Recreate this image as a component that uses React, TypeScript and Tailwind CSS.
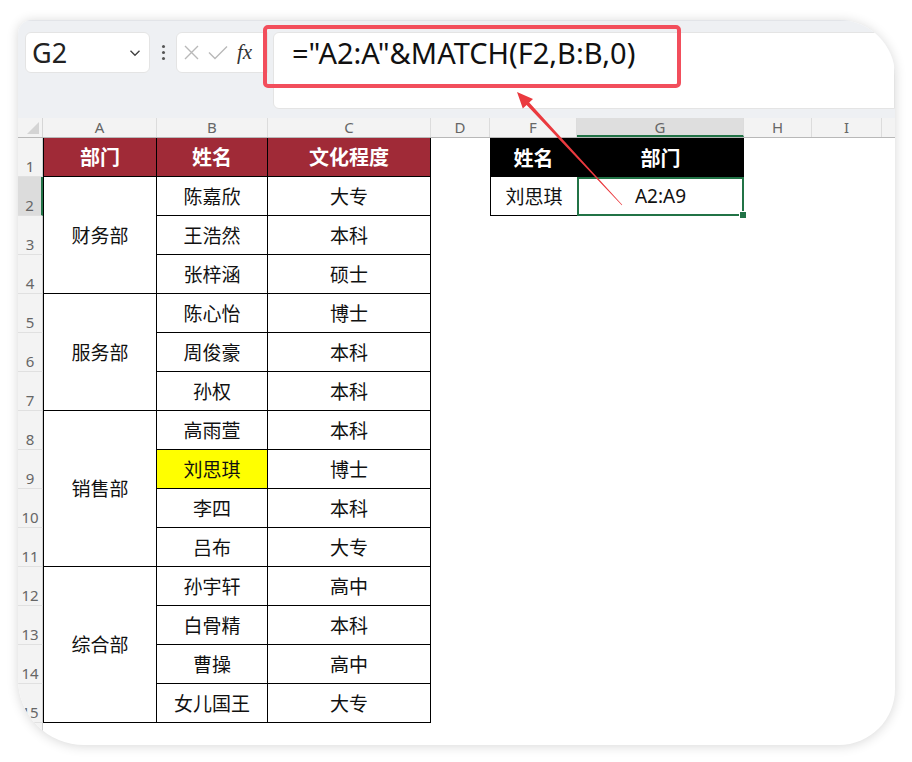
import React from 'react';

const CJK = "font-['Noto_Sans_CJK_SC','Noto_Sans',sans-serif]";
const LATIN = "font-['Noto_Sans','Liberation_Sans',sans-serif]";

const PEOPLE = [
    ['陈嘉欣', '大专'],
    ['王浩然', '本科'],
    ['张梓涵', '硕士'],
    ['陈心怡', '博士'],
    ['周俊豪', '本科'],
    ['孙权', '本科'],
    ['高雨萱', '本科'],
    ['刘思琪', '博士'],
    ['李四', '本科'],
    ['吕布', '大专'],
    ['孙宇轩', '高中'],
    ['白骨精', '本科'],
    ['曹操', '高中'],
    ['女儿国王', '大专'],
];

const DEPTS = [
    { name: '财务部', h: 'h-[117px]' },
    { name: '服务部', h: 'h-[117px]' },
    { name: '销售部', h: 'h-[156px]' },
    { name: '综合部', h: 'h-[156px]' },
];

const COLS = [
    { label: 'A', w: 'w-[114px]' },
    { label: 'B', w: 'w-[111px]' },
    { label: 'C', w: 'w-[163px]' },
    { label: 'D', w: 'w-[59px]' },
    { label: 'F', w: 'w-[87px]' },
    { label: 'G', w: 'w-[167px]' },
    { label: 'H', w: 'w-[68px]' },
    { label: 'I', w: 'w-[70px]' },
];

function Toolbar() {
    return (
        <div className="h-[98px] bg-[#eef0f3] flex items-start pt-[11px] border-t border-[#e2e4e8]">
            <div className="ml-[7px] w-[125px] h-[41px] bg-white rounded-[6px] border border-[#e4e4e4] flex items-center justify-between pl-[6px] pr-[8px]">
                <span className={`${LATIN} text-[27px] leading-none text-[#222]`}>G2</span>
                <svg width="12" height="8" viewBox="0 0 12 8">
                    <path d="M1.5 1.8 L6 6.2 L10.5 1.8" fill="none" stroke="#444" strokeWidth="1.4" />
                </svg>
            </div>
            <div className="w-[26px] h-[41px] flex flex-col items-center justify-center gap-[3px]">
                <span className="w-[3px] h-[3px] bg-[#555] rounded-full" />
                <span className="w-[3px] h-[3px] bg-[#555] rounded-full" />
                <span className="w-[3px] h-[3px] bg-[#555] rounded-full" />
            </div>
            <div className="w-[92px] h-[41px] bg-white rounded-l-[6px] border border-[#e4e4e4] flex items-center pl-[7px] gap-[9px]">
                <svg width="15" height="15" viewBox="0 0 15 15">
                    <path d="M1 1 L14 14 M14 1 L1 14" stroke="#b9b9b9" strokeWidth="1.4" />
                </svg>
                <svg width="20" height="15" viewBox="0 0 20 15">
                    <path d="M1 7.5 L7 13.5 L19 1.5" fill="none" stroke="#b9b9b9" strokeWidth="1.4" />
                </svg>
                <span className="font-['Liberation_Serif',serif] italic text-[21px] leading-none text-[#333]">fx</span>
            </div>
            <div className="ml-[5px] flex-1 h-[77px] bg-white rounded-l-[6px] border border-[#e4e4e4] pl-[18px]">
                <div className={`${LATIN} text-[29px] leading-[40px] text-[#111]`}>="A2:A"&amp;MATCH(F2,B:B,0)</div>
            </div>
        </div>
    );
}

function ColumnHeaders() {
    return (
        <div className={`h-[20px] flex bg-[#f3f3f3] border-b border-[#b8b8b8] ${LATIN} text-[15px] text-[#666] leading-[19px]`}>
            <div className="w-[25px] border-r border-[#d6d6d6] relative">
                <span className="absolute right-[3px] bottom-[3px] w-0 h-0 border-l-[12px] border-l-transparent border-b-[12px] border-b-[#d4d4d4]" />
            </div>
            {COLS.map((c) => (
                <div
                    key={c.label}
                    className={`${c.w} text-center border-r border-[#dcdcdc] ${c.label === 'G' ? 'bg-[#dedede] border-b-2 border-b-[#217346]' : ''}`}
                >
                    {c.label}
                </div>
            ))}
            <div className="flex-1" />
        </div>
    );
}

function RowHeaders() {
    const rows = Array.from({ length: 16 }, (_, i) => i + 1);
    return (
        <div className={`w-[25px] flex flex-col ${LATIN} text-[15px] text-[#666] leading-none`}>
            {rows.map((n) => (
                <div
                    key={n}
                    className={`h-[39px] shrink-0 flex items-end justify-center pb-[2px] border-b border-[#e0e0e0] ${
                        n === 2 ? 'bg-[#dcdcdc] border-r-2 border-r-[#217346]' : 'bg-[#f3f3f3] border-r border-r-[#cfcfcf]'
                    }`}
                >
                    {n < 16 ? n : ''}
                </div>
            ))}
        </div>
    );
}

function HeadCell({ children, bg }: { children: React.ReactNode; bg: string }) {
    return (
        <div className={`h-[39px] shrink-0 flex items-center justify-center text-white font-bold text-[20px] ${bg}`}>
            {children}
        </div>
    );
}

export default function App() {
    return (
        <div className="w-[912px] h-[762px] bg-white overflow-hidden pt-[20px] pl-[18px]">
            <div className="relative w-[877px] h-[725px] overflow-hidden bg-white rounded-tl-[14px] rounded-tr-[56px] rounded-br-[56px] rounded-bl-[66px] shadow-[0_1px_12px_rgba(0,0,0,0.16)]">
                <Toolbar />
                <ColumnHeaders />
                <div className={`flex ${CJK} text-[19px] text-[#111]`}>
                    <RowHeaders />
                    {/* A: departments, merged */}
                    <div className="w-[114px] flex flex-col">
                        <HeadCell bg="bg-[#a02a37] border-l border-r border-b border-black">部门</HeadCell>
                        {DEPTS.map((d) => (
                            <div key={d.name} className={`${d.h} shrink-0 flex items-center justify-center border-l border-r border-b border-black`}>
                                {d.name}
                            </div>
                        ))}
                    </div>
                    {/* B: names */}
                    <div className="w-[111px] flex flex-col">
                        <HeadCell bg="bg-[#a02a37] border-r border-b border-black">姓名</HeadCell>
                        {PEOPLE.map(([name]) => (
                            <div
                                key={name}
                                className={`h-[39px] shrink-0 flex items-center justify-center border-r border-b border-black ${name === '刘思琪' ? 'bg-[#ffff00]' : ''}`}
                            >
                                {name}
                            </div>
                        ))}
                    </div>
                    {/* C: education */}
                    <div className="w-[163px] flex flex-col">
                        <HeadCell bg="bg-[#a02a37] border-r border-b border-black">文化程度</HeadCell>
                        {PEOPLE.map(([name, edu]) => (
                            <div key={name} className="h-[39px] shrink-0 flex items-center justify-center border-r border-b border-black">
                                {edu}
                            </div>
                        ))}
                    </div>
                    <div className="w-[59px]" />
                    {/* F / G lookup */}
                    <div className="w-[87px] flex flex-col">
                        <HeadCell bg="bg-black">姓名</HeadCell>
                        <div className="h-[39px] flex items-center justify-center border-l border-b border-black">刘思琪</div>
                    </div>
                    <div className="w-[167px] flex flex-col">
                        <HeadCell bg="bg-black">部门</HeadCell>
                        <div className="relative h-[39px] flex items-center justify-center border-2 border-[#217346]">
                            <span className={LATIN}>A2:A9</span>
                            <span className="absolute -right-[5px] -bottom-[5px] w-[8px] h-[8px] bg-[#217346] border border-white" />
                        </div>
                    </div>
                    <div className="w-[68px]" />
                    <div className="w-[70px]" />
                </div>

                {/* highlight box over the formula */}
                <div className="absolute left-[245px] top-[5px] w-[418px] h-[63px] border-[4px] border-[#f24e5c] rounded-[5px]" />

                {/* arrow */}
                <svg className="absolute left-0 top-0 pointer-events-none" width="877" height="725" viewBox="0 0 877 725">
                    <polygon
                        points="499,72 515,78.9 511.2,82.5 604.2,184.8 603.8,185.2 508.6,84.9 504.8,88.5"
                        fill="#ea3a3f"
                    />
                </svg>
            </div>
        </div>
    );
}
